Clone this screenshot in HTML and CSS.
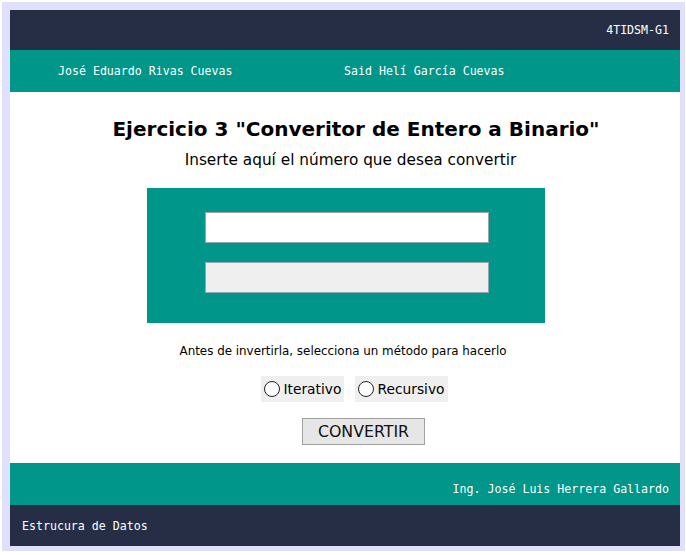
FILE: index.html
```html
<!DOCTYPE html>
<html lang="es">
<head>
<meta charset="utf-8">
<title>Convertidor</title>
<link rel="stylesheet" href="styles.css">
</head>
<body>
<div class="frame">
  <div class="page">
    <header class="topbar">
      <span class="group">4TIDSM-G1</span>
    </header>
    <nav class="names">
      <span class="name name-1">José Eduardo Rivas Cuevas</span>
      <span class="name name-2">Said Helí García Cuevas</span>
    </nav>
    <main class="main">
      <h1 class="title">Ejercicio 3 "Converitor de Entero a Binario"</h1>
      <p class="subtitle">Inserte aquí el número que desea convertir</p>
      <div class="panel">
        <input class="field" type="text">
        <input class="field field-out" type="text" readonly>
      </div>
      <p class="hint">Antes de invertirla, selecciona un método para hacerlo</p>
      <div class="options">
        <label class="option"><span class="radio"></span>Iterativo</label>
        <label class="option"><span class="radio"></span>Recursivo</label>
      </div>
      <button class="btn" type="button">CONVERTIR</button>
    </main>
    <footer class="foot-teal">
      <span>Ing. José Luis Herrera Gallardo</span>
    </footer>
    <footer class="foot-navy">
      <span>Estrucura de Datos</span>
    </footer>
  </div>
</div>
</body>
</html>
```
FILE: styles.css
```css
* { box-sizing: border-box; }
html, body { margin: 0; padding: 0; background: #ffffff; }
body { width: 686px; height: 555px; overflow: hidden; }

.frame {
  margin: 2px 1px 0 2px;
  padding: 8px 5px 5px 8px;
  background: #e0e0fb;
}
.page {
  display: flex;
  flex-direction: column;
  height: 536px;
  background: #ffffff;
  font-family: "DejaVu Sans Mono", "Liberation Mono", monospace;
  font-size: 11.6px;
  color: #ffffff;
}

.topbar {
  height: 40px;
  background: #252e45;
  display: flex;
  align-items: center;
  justify-content: flex-end;
  padding: 0 11px 0 0;
}

.names {
  height: 42px;
  background: #00968a;
  display: flex;
  align-items: center;
  padding-left: 48px;
}
.name-1 { width: 286px; }

.main {
  flex: 1;
  display: flex;
  flex-direction: column;
  align-items: center;
  color: #000000;
  font-family: "DejaVu Sans", "Liberation Sans", sans-serif;
}
.title {
  margin: 23px 0 0 22px;
  font-size: 20px;
  font-weight: bold;
  line-height: 28px;
}
.subtitle {
  margin: 7px 0 0 11px;
  font-size: 15.3px;
  line-height: 20px;
}
.panel {
  margin: 18px 0 0 2px;
  width: 398px;
  height: 135px;
  background: #00968a;
  display: flex;
  flex-direction: column;
  align-items: center;
  padding-top: 24px;
  gap: 19px;
}
.field {
  display: block;
  width: 284px;
  height: 31px;
  margin: 0 0 0 2px;
  border: 1px solid #9aa5b1;
  background: #ffffff;
  padding: 0;
}
.field-out { background: #efefef; }

.hint {
  margin: 20px 0 0 -4px;
  font-size: 11.9px;
  line-height: 16px;
}
.options {
  margin: 17px 0 0 19px;
  display: flex;
  gap: 11px;
}
.option {
  display: flex;
  align-items: center;
  height: 26px;
  padding: 0 3px 0 3px;
  background: #efefef;
  font-size: 13.8px;
  gap: 3px;
}
.radio {
  width: 16px;
  height: 16px;
  border: 1.3px solid #222;
  border-radius: 50%;
  background: #fff;
}
.btn {
  margin: 16px 0 0 37px;
  width: 123px;
  height: 27px;
  background: #e6e6e6;
  border: 1px solid #a0a0a0;
  font-family: "DejaVu Sans", "Liberation Sans", sans-serif;
  font-size: 15.8px;
  color: #111;
  padding: 0;
}

.foot-teal {
  height: 42px;
  background: #00968a;
  display: flex;
  align-items: flex-end;
  justify-content: flex-end;
  padding: 0 11px 9px 0;
}
.foot-navy {
  height: 41px;
  background: #252e45;
  display: flex;
  align-items: center;
  padding-left: 12px;
}
```
